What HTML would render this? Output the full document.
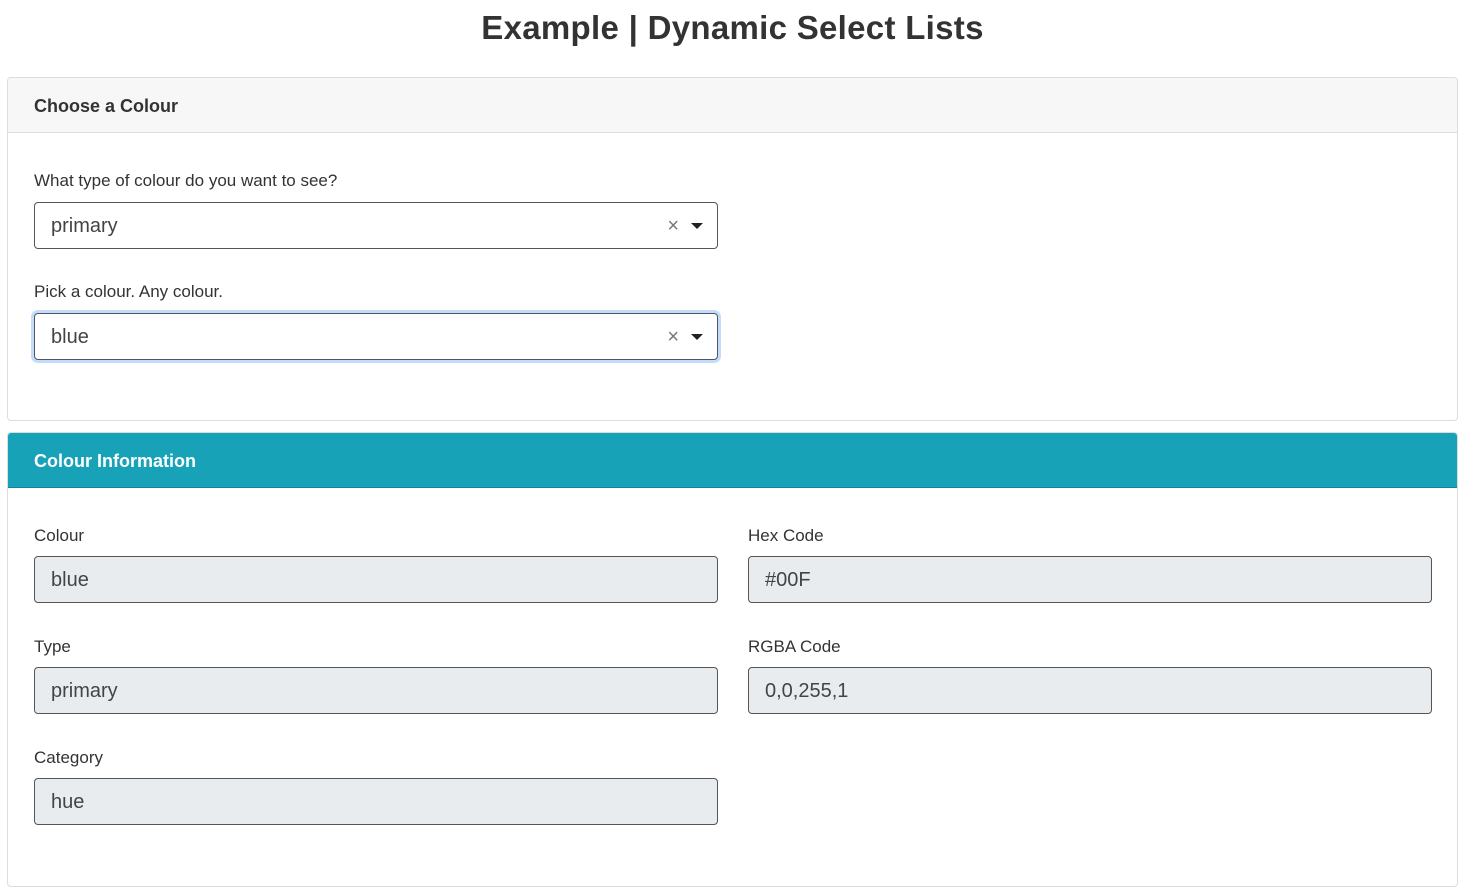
<!DOCTYPE html><html><head><style>
body{margin:0;background:#fff;font-family:"Liberation Sans",sans-serif;color:#333;}
h1{position:absolute;top:9px;left:0;width:1465px;text-align:center;margin:0;font-size:33px;font-weight:bold;color:#333;letter-spacing:0.3px}
.card{position:absolute;left:7px;width:1449px;border:1px solid #ddd;border-radius:4px;background:#fff;overflow:hidden}
.hd{height:54px;border-bottom:1px solid #ddd;background:#f7f7f7;font-weight:bold;font-size:18px;line-height:56px;padding-left:26px;color:#333}
.l{position:absolute;font-size:17px;color:#333}
.in{position:absolute;width:684px;height:47px;border:1px solid #555;border-radius:4px;font-size:20px;line-height:47px;padding-left:16px;box-sizing:border-box;color:#444}
.ro{background:#e9ecef}
.x{position:absolute;right:38px;top:0;color:#777;font-size:20px}
.ar{position:absolute;right:14px;top:20px;width:0;height:0;border-left:6px solid transparent;border-right:6px solid transparent;border-top:6px solid #222}
</style></head><body>
<h1>Example | Dynamic Select Lists</h1>
<div class="card" style="top:77px;height:342px"><div class="hd">Choose a Colour</div>
<div class="l" style="left:26px;top:93px">What type of colour do you want to see?</div>
<div class="in" style="left:26px;top:124px">primary<span class="x">×</span><span class="ar"></span></div>
<div class="l" style="left:26px;top:204px">Pick a colour. Any colour.</div>
<div class="in" style="left:26px;top:235px;box-shadow:0 0 0 3px #c2dcfb">blue<span class="x">×</span><span class="ar"></span></div>
</div>
<div class="card" style="top:432px;height:453px"><div class="hd" style="background:#17a2b8;color:#fff;border-bottom:1px solid #138496">Colour Information</div>
<div class="l" style="left:26px;top:93px">Colour</div>
<div class="in ro" style="left:26px;top:123px">blue</div>
<div class="l" style="left:740px;top:93px">Hex Code</div>
<div class="in ro" style="left:740px;top:123px;width:684px">#00F</div>
<div class="l" style="left:26px;top:204px">Type</div>
<div class="in ro" style="left:26px;top:234px">primary</div>
<div class="l" style="left:740px;top:204px">RGBA Code</div>
<div class="in ro" style="left:740px;top:234px">0,0,255,1</div>
<div class="l" style="left:26px;top:315px">Category</div>
<div class="in ro" style="left:26px;top:345px">hue</div>
</div>
</body></html>
